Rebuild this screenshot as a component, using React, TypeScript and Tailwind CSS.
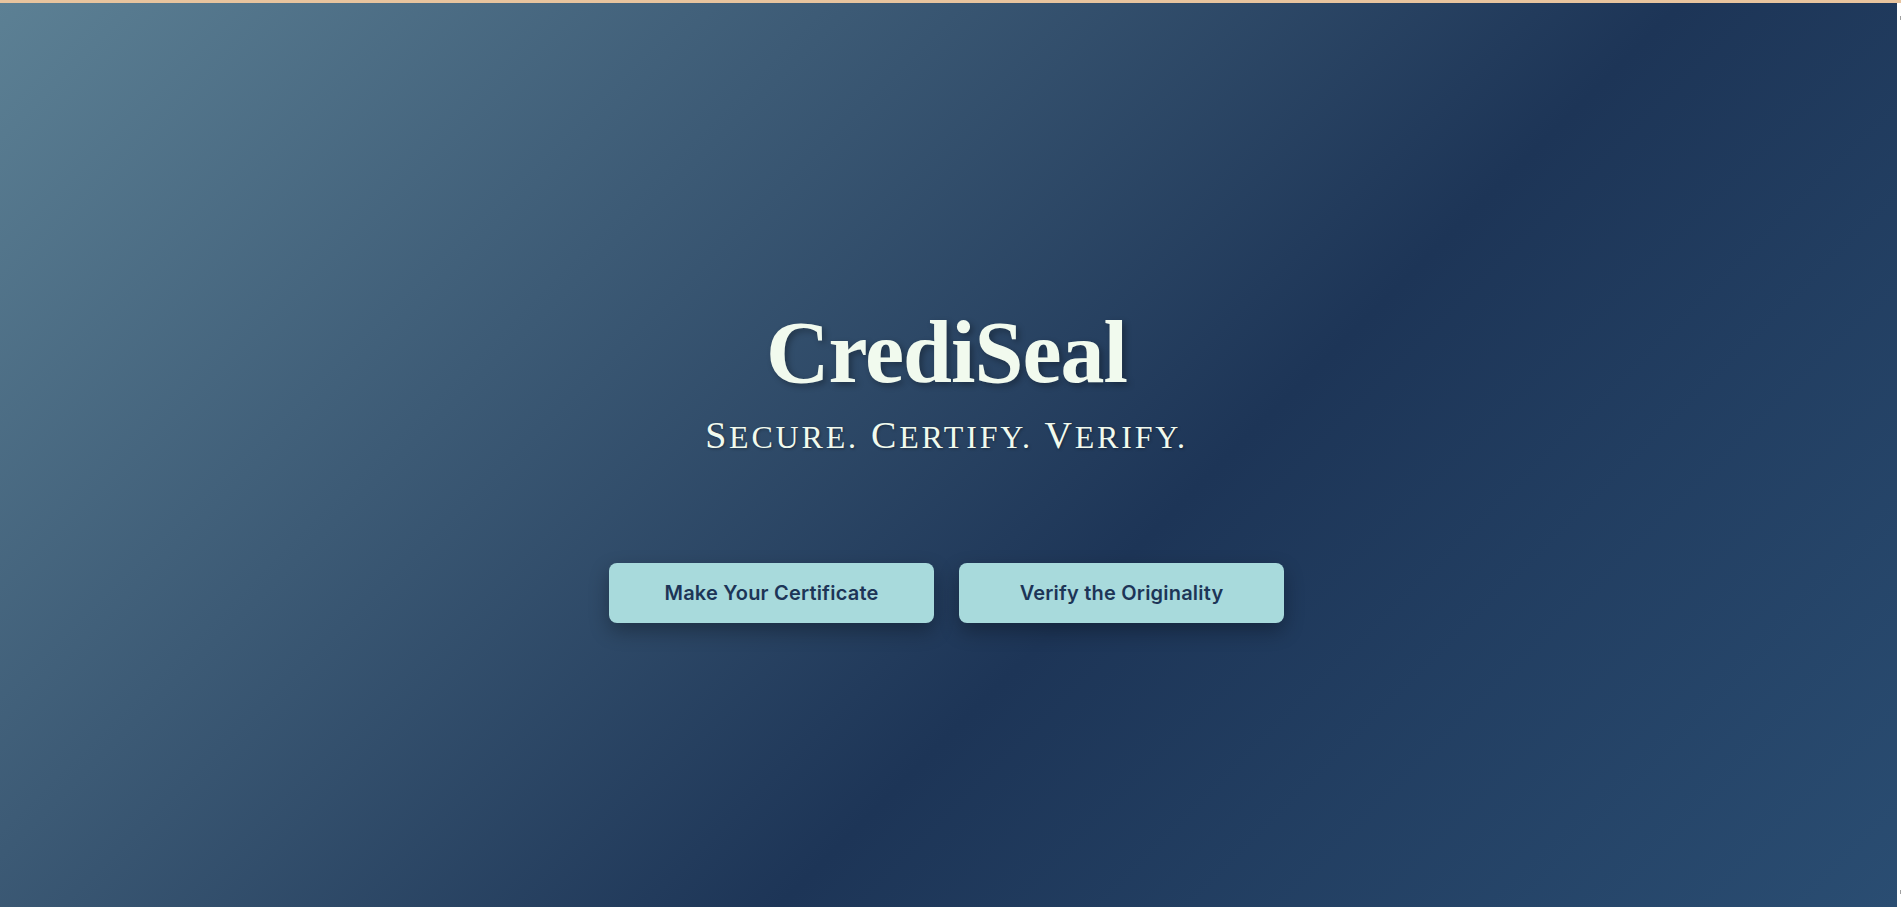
import React from 'react'

const serif = "font-['Liberation_Serif','Times_New_Roman',serif]"

function Tagline() {
  // small-caps look: big first letters, smaller caps for the rest
  const words = ['Secure.', 'Certify.', 'Verify.']
  return (
    <p className={`${serif} mt-[18px] text-[38px] leading-[40px] tracking-[2.8px] text-[#f1faee] [text-shadow:1px_1px_3px_rgba(0,0,0,0.35)]`}>
      {words.map((w, i) => (
        <React.Fragment key={w}>
          {i > 0 && ' '}
          <span>{w[0]}</span>
          <span className="text-[32px] uppercase">{w.slice(1)}</span>
        </React.Fragment>
      ))}
    </p>
  )
}

export default function App() {
  const btn =
    "h-[60px] w-[325px] rounded-lg bg-[#a8dadc] font-['Inter',sans-serif] text-[20px] font-semibold tracking-[0.2px] text-[#1d3557] shadow-[0_8px_20px_rgba(0,0,0,0.3)]"
  return (
    <div className="flex h-screen flex-col overflow-hidden border-t-[3px] border-[#e8c49e]">
      <div className="flex flex-1">
        <main className="flex flex-1 flex-col items-center bg-[linear-gradient(135deg,#5c8094_0%,#1d3557_60%,#2a4d72_100%)] pr-[4px] pt-[306px]">
          <h1 className={`${serif} text-[88px] font-bold leading-none tracking-[-1px] text-[#f1faee] [text-shadow:3px_3px_6px_rgba(0,0,0,0.3)]`}>
            CrediSeal
          </h1>
          <Tagline />
          <div className="mt-[106px] flex gap-[25px]">
            <button className={btn}>Make Your Certificate</button>
            <button className={btn}>Verify the Originality</button>
          </div>
        </main>
        {/* scrollbar strip */}
        <div className="flex w-1 flex-col justify-between bg-white py-[13px]">
          <div className="ml-[3px] h-[4px] w-px bg-[#a0a0a0]" />
          <div className="ml-[3px] h-[4px] w-px bg-[#a0a0a0]" />
        </div>
      </div>
    </div>
  )
}
